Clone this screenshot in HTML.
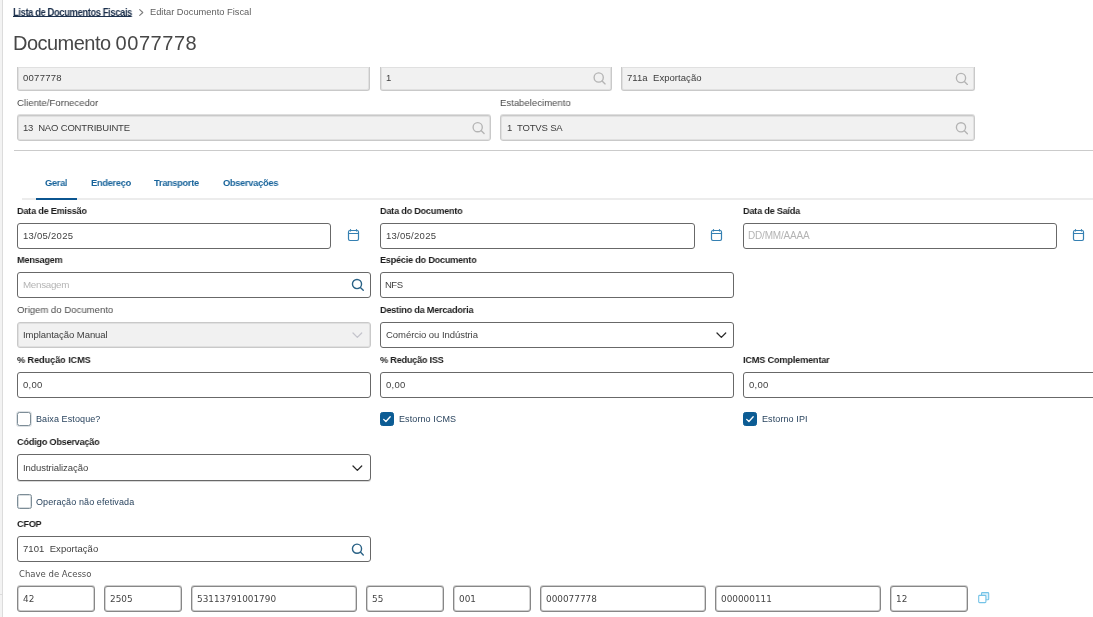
<!DOCTYPE html>
<html lang="pt-BR">
<head>
<meta charset="utf-8">
<title>Documento 0077778</title>
<style>
*{box-sizing:border-box;margin:0;padding:0}
html,body{width:1093px;height:617px;overflow:hidden;background:#fff}
body{position:relative;font-family:"Liberation Sans",sans-serif;color:#222;font-size:9px}
.abs{position:absolute;white-space:nowrap;will-change:transform}
.inp>span{display:inline-block;will-change:transform}
.strip{position:absolute;left:0;top:0;width:3px;height:617px;background:#f3f3f3;border-right:1px solid #dcdcdc}
.strip2{position:absolute;left:0;top:594px;width:3px;height:1px;background:#dcdcdc}
.bc{top:6px;font-size:9.3px;line-height:13px;color:#5a5a5a}
a.bc{left:12.5px;top:5.6px;font-size:10.2px;color:#1b2f4b;font-weight:bold;text-decoration:underline;text-decoration-thickness:1px;text-underline-offset:0px;text-decoration-skip-ink:none;letter-spacing:-0.44px;transform:scaleX(.925);transform-origin:0 50%}
.bc.sep{left:138.5px;top:6.5px;color:#777;font-size:10px}
.bc.cur{left:150px;top:6.4px;letter-spacing:0;color:#606060}
.title{top:30px;left:12.8px;font-size:20px;line-height:26px;color:#474747;font-weight:normal;letter-spacing:-0.1px}
.lbl{font-size:9.9px;line-height:12px;color:#1c1c1c;font-weight:bold;letter-spacing:-0.25px;transform:scaleX(.926);transform-origin:0 50%;margin-top:-0.6px}
.lbl.dis{font-size:9.8px;font-weight:normal;color:#4a4a4a;letter-spacing:0;transform:scaleX(.976);margin-top:-0.7px}
.inp{position:absolute;height:26px;border:1px solid #686868;border-radius:3px;background:#fff;font-size:9.5px;line-height:24.5px;padding-left:5px;color:#3f3f3f;white-space:nowrap;overflow:hidden;letter-spacing:0.27px}
.inp.dis{background:#f1f1f1;border-color:#c9c9c9;color:#3c3c3c;box-shadow:inset 0 0 0 1px rgba(200,200,200,.4)}
.inp.top{border-top:none;border-radius:0 0 3px 3px;height:24px;line-height:22px;padding-left:4.6px}
.inp.ph{color:#b4b4b4}
.inp.r2{box-shadow:0 -1px 0 #dedede,inset 0 0 0 1px rgba(200,200,200,.4)}
.inp.t{letter-spacing:-0.05px}
.inp.m{letter-spacing:0.05px}
.inp.k{font-family:"DejaVu Sans","Liberation Sans",sans-serif;font-size:8.9px;letter-spacing:0;border-color:#878787;border-radius:3px;box-shadow:0 -1px 0 rgba(130,130,130,.4),inset 1px 0 0 rgba(130,130,130,.35),inset -1px 0 0 rgba(130,130,130,.35),inset 0 -1px 0 rgba(130,130,130,.4);line-height:24.5px;color:#444}
.ico{position:absolute;overflow:visible}
.hr{position:absolute;height:1px;background:#cbcbcb}
.tab{font-size:9.5px;line-height:13px;color:#17639a;font-weight:bold;letter-spacing:-0.3px;top:175.6px;transform:scaleX(.975);transform-origin:0 50%}
.chk{position:absolute;width:14px;height:14px;border:1px solid #7d8d97;border-radius:2.5px;background:#fff;box-shadow:0 0 0 1px rgba(125,141,151,.25)}
.chk.on{background:#0c5c94;border-color:#0c5c94;box-shadow:none}
.chkl{font-size:9px;line-height:12px;color:#2a445e;letter-spacing:0.1px}
</style>
</head>
<body>
<div class="strip"></div><div class="strip2"></div>

<a class="abs bc">Lista de Documentos Fiscais</a><svg class="ico" style="left:138px;top:7.6px" width="8" height="9" viewBox="0 0 8 9" fill="none" stroke="#7c7c7c" stroke-width="1.1" stroke-linecap="round" stroke-linejoin="round"><path d="M1.7 1.7L4.8 4.5L1.7 7.3"/></svg><div class="abs bc cur">Editar Documento Fiscal</div>
<div class="abs title"><span style="letter-spacing:-0.53px">Documento </span><span style="letter-spacing:0.55px">0077778</span></div>

<!-- top disabled row -->
<div class="inp dis top" style="left:17px;top:67px;width:353px"><span>0077778</span></div>
<div class="inp dis top" style="left:380px;top:67px;width:232px"><span>1</span></div>
<div class="inp dis top m" style="left:621px;top:67px;width:354px"><span>711a&nbsp; Exportação</span></div>

<div class="abs lbl dis" style="left:17px;top:98px">Cliente/Fornecedor</div>
<div class="abs lbl dis" style="left:500.4px;top:98px">Estabelecimento</div>
<div class="inp dis t r2" style="left:17px;top:115px;width:474px"><span style="letter-spacing:-0.17px">13&nbsp; NAO CONTRIBUINTE</span></div>
<div class="inp dis t r2" style="left:500px;top:115px;width:475px;padding-left:5.6px"><span style="letter-spacing:-0.15px">1&nbsp; TOTVS SA</span></div>

<div class="hr" style="left:14px;top:150px;width:1079px"></div>

<!-- tabs -->
<div class="abs tab" style="left:45px">Geral</div>
<div class="abs tab" style="left:91px">Endereço</div>
<div class="abs tab" style="left:154px">Transporte</div>
<div class="abs tab" style="left:223px">Observações</div>
<div class="hr" style="left:22px;top:198px;width:1071px;height:2px;background:#ececec"></div>
<div class="hr" style="left:36px;top:198px;width:41px;height:2px;background:#0b5590"></div>

<!-- row 1 -->
<div class="abs lbl" style="left:17px;top:206px">Data de Emissão</div>
<div class="abs lbl" style="left:380px;top:206px">Data do Documento</div>
<div class="abs lbl" style="left:743px;top:206px">Data de Saída</div>
<div class="inp" style="left:17px;top:223px;width:314px"><span>13/05/2025</span></div>
<div class="inp" style="left:380px;top:223px;width:315px"><span>13/05/2025</span></div>
<div class="inp ph" style="left:743px;top:223px;width:314px;padding-left:4.4px"><span style="font-size:10px;letter-spacing:-0.18px">DD/MM/AAAA</span></div>

<!-- row 2 -->
<div class="abs lbl" style="left:17px;top:255px">Mensagem</div>
<div class="abs lbl" style="left:380px;top:255px">Espécie do Documento</div>
<div class="inp ph" style="left:17px;top:272px;width:354px"><span style="font-size:9.8px;letter-spacing:-0.3px">Mensagem</span></div>
<div class="inp t" style="left:380px;top:272px;width:354px"><span style="letter-spacing:-0.5px;margin-left:-0.8px">NFS</span></div>

<!-- row 3 -->
<div class="abs lbl dis" style="left:17px;top:305px">Origem do Documento</div>
<div class="abs lbl" style="left:380px;top:305px">Destino da Mercadoria</div>
<div class="inp dis t" style="left:17px;top:322px;width:354px"><span>Implantação Manual</span></div>
<div class="inp t" style="left:380px;top:322px;width:354px"><span>Comércio ou Indústria</span></div>

<!-- row 4 -->
<div class="abs lbl" style="left:17px;top:355px;letter-spacing:-0.08px">% Redução ICMS</div>
<div class="abs lbl" style="left:380px;top:355px">% Redução ISS</div>
<div class="abs lbl" style="left:743px;top:355px;letter-spacing:-0.18px">ICMS Complementar</div>
<div class="inp" style="left:17px;top:372px;width:354px"><span>0,00</span></div>
<div class="inp" style="left:380px;top:372px;width:354px"><span>0,00</span></div>
<div class="inp" style="left:743px;top:372px;width:354px"><span>0,00</span></div>

<!-- checkboxes -->
<div class="chk" style="left:17px;top:412px"></div>
<div class="abs chkl" style="left:36px;top:413px">Baixa Estoque?</div>
<div class="chk on" style="left:380px;top:412px"></div>
<div class="abs chkl" style="left:399px;top:413px">Estorno ICMS</div>
<div class="chk on" style="left:743px;top:412px"></div>
<div class="abs chkl" style="left:762px;top:413px">Estorno IPI</div>

<!-- codigo observacao -->
<div class="abs lbl" style="left:17px;top:437px">Código Observação</div>
<div class="inp t" style="left:17px;top:454px;width:354px;height:27px;line-height:25.5px;box-shadow:0 1px 0 rgba(104,104,104,.25)"><span>Industrialização</span></div>

<div class="chk" style="left:17px;top:494px;width:15px;height:15px;box-shadow:inset 0 0 0 1px rgba(125,141,151,.3)"></div>
<div class="abs chkl" style="left:36px;top:496px">Operação não efetivada</div>

<div class="abs lbl" style="left:17px;top:519px">CFOP</div>
<div class="inp m" style="left:17px;top:536px;width:354px"><span>7101&nbsp; Exportação</span></div>

<div class="abs lbl dis" style="left:19px;top:568px;font-family:'DejaVu Sans','Liberation Sans',sans-serif;font-size:8.5px;letter-spacing:0;color:#505050;transform:none;margin-top:0">Chave de Acesso</div>
<div class="inp k" style="left:17px;top:586px;width:78px"><span>42</span></div>
<div class="inp k" style="left:104px;top:586px;width:78px"><span>2505</span></div>
<div class="inp k" style="left:191px;top:586px;width:166px"><span>53113791001790</span></div>
<div class="inp k" style="left:366px;top:586px;width:78px"><span>55</span></div>
<div class="inp k" style="left:453px;top:586px;width:78px"><span>001</span></div>
<div class="inp k" style="left:540px;top:586px;width:166px"><span>000077778</span></div>
<div class="inp k" style="left:715px;top:586px;width:166px"><span>000000111</span></div>
<div class="inp k" style="left:890px;top:586px;width:78px"><span>12</span></div>

<!-- icons -->
<svg class="ico" style="left:591px;top:70px" width="16" height="16" viewBox="0 0 16 16" fill="none" stroke="#b4b4b4" stroke-width="1.35" stroke-linecap="round"><circle cx="7.70" cy="7.50" r="4.6"/><path d="M11.10 10.90L14.10 13.90"/></svg>
<svg class="ico" style="left:954px;top:71px" width="16" height="16" viewBox="0 0 16 16" fill="none" stroke="#b4b4b4" stroke-width="1.35" stroke-linecap="round"><circle cx="7.00" cy="7.00" r="4.6"/><path d="M10.40 10.40L13.40 13.40"/></svg>
<svg class="ico" style="left:470px;top:120px" width="16" height="16" viewBox="0 0 16 16" fill="none" stroke="#b4b4b4" stroke-width="1.35" stroke-linecap="round"><circle cx="7.70" cy="7.15" r="4.6"/><path d="M11.10 10.55L14.10 13.55"/></svg>
<svg class="ico" style="left:954px;top:120px" width="16" height="16" viewBox="0 0 16 16" fill="none" stroke="#b4b4b4" stroke-width="1.35" stroke-linecap="round"><circle cx="7.00" cy="7.30" r="4.6"/><path d="M10.40 10.70L13.40 13.70"/></svg>
<svg class="ico" style="left:350px;top:277px" width="16" height="16" viewBox="0 0 16 16" fill="none" stroke="#2a6286" stroke-width="1.4" stroke-linecap="round"><circle cx="7.00" cy="7.05" r="4.55"/><path d="M10.37 10.42L13.27 13.32"/></svg>
<svg class="ico" style="left:350px;top:541px" width="16" height="16" viewBox="0 0 16 16" fill="none" stroke="#2a6286" stroke-width="1.4" stroke-linecap="round"><circle cx="7.00" cy="7.70" r="4.55"/><path d="M10.37 11.07L13.27 13.97"/></svg>
<svg class="ico" style="left:348px;top:229px" width="12" height="13" viewBox="0 0 12 13" fill="none" stroke="#3580b2" stroke-width="1.2" stroke-linecap="round"><rect x="0.5" y="1.5" width="10" height="10" rx="1.4"/><path d="M0.5 4.5H10.5M2.5 0.5V2M8.5 0.5V2"/></svg>
<svg class="ico" style="left:710.5px;top:229px" width="12" height="13" viewBox="0 0 12 13" fill="none" stroke="#3580b2" stroke-width="1.2" stroke-linecap="round"><rect x="0.5" y="1.5" width="10" height="10" rx="1.4"/><path d="M0.5 4.5H10.5M2.5 0.5V2M8.5 0.5V2"/></svg>
<svg class="ico" style="left:1073.4px;top:229px" width="12" height="13" viewBox="0 0 12 13" fill="none" stroke="#3580b2" stroke-width="1.2" stroke-linecap="round"><rect x="0.5" y="1.5" width="10" height="10" rx="1.4"/><path d="M0.5 4.5H10.5M2.5 0.5V2M8.5 0.5V2"/></svg>
<svg class="ico" style="left:352.4px;top:332.3px" width="11" height="7" viewBox="0 0 11 7" fill="none" stroke="#c4c4cc" stroke-width="1.25" stroke-linecap="round" stroke-linejoin="round"><path d="M1 1L5.35 5.4L9.7 1"/></svg>
<svg class="ico" style="left:715.6px;top:332.3px" width="11" height="7" viewBox="0 0 11 7" fill="none" stroke="#2a2a2a" stroke-width="1.3" stroke-linecap="round" stroke-linejoin="round"><path d="M1 1L5.35 5.4L9.7 1"/></svg>
<svg class="ico" style="left:352.2px;top:464.9px" width="11" height="7" viewBox="0 0 11 7" fill="none" stroke="#2a2a2a" stroke-width="1.3" stroke-linecap="round" stroke-linejoin="round"><path d="M1 1L5.35 5.4L9.7 1"/></svg>
<svg class="ico" style="left:380px;top:412px" width="14" height="14" viewBox="0 0 14 14" fill="none" stroke="#fff" stroke-width="1.3" stroke-linecap="round" stroke-linejoin="round"><path d="M3.7 7.4L5.9 9.5L10.2 4.8"/></svg>
<svg class="ico" style="left:743px;top:412px" width="14" height="14" viewBox="0 0 14 14" fill="none" stroke="#fff" stroke-width="1.3" stroke-linecap="round" stroke-linejoin="round"><path d="M3.7 7.4L5.9 9.5L10.2 4.8"/></svg>
<svg class="ico" style="left:978px;top:592px" width="12" height="12" viewBox="0 0 12 12" stroke="#74c3e7" stroke-width="1.1"><rect x="3.5" y="0.6" width="7.2" height="7.2" rx="0.9" fill="#ddf0fa"/><rect x="0.7" y="3.4" width="7.2" height="7.2" rx="0.9" fill="#fff"/></svg>
</body>
</html>
